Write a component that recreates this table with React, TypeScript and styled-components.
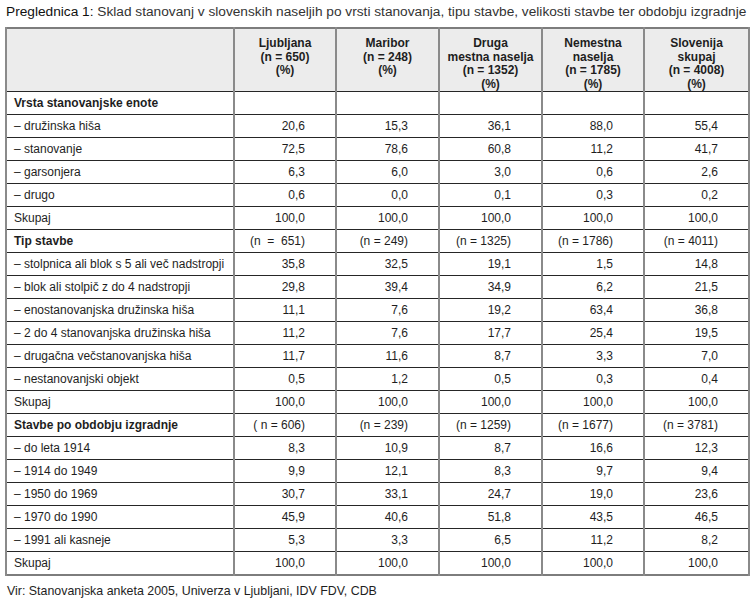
import React from "react";
import styled, { createGlobalStyle } from "styled-components";

const Global = createGlobalStyle`
  html, body { margin: 0; padding: 0; background: #ffffff; }
  body { font-family: "Liberation Sans", Arial, sans-serif; color: #1e1e1e; }
`;

const Page = styled.div`
  width: 753px;
  height: 604px;
  padding: 3px 0 0 5px;
  box-sizing: border-box;
  display: flex;
  flex-direction: column;
`;

const Title = styled.div`
  font-size: 13.7px;
  line-height: 18px;
  color: #333;
  padding-left: 1px;
  margin-bottom: 6px;
  white-space: nowrap;
`;

const TitleLabel = styled.span`
  color: #111;
`;

const Table = styled.table`
  border-collapse: collapse;
  table-layout: fixed;
  width: 743px;
  border: 2px solid #7d7d7d;
  font-size: 12px;
`;

const HeadCell = styled.th`
  background: #ececec;
  border-left: 2px solid #8a8a8a;
  border-right: 2px solid #8a8a8a;
  border-bottom: 1px solid #262626;
  padding: 8px 2px 0;
  height: 62px;
  box-sizing: border-box;
  vertical-align: top;
  text-align: center;
  font-weight: bold;
  font-size: 12px;
  line-height: 13.5px;
  color: #1e1e1e;
`;

const Cell = styled.td<{ $label?: boolean; $bold?: boolean }>`
  border-left: 2px solid #8a8a8a;
  border-right: 2px solid #8a8a8a;
  border-top: 1px solid #262626;
  border-bottom: 1px solid #262626;
  height: 22px;
  padding: ${(p) => (p.$label ? "0 4px 0 7px" : "0 30px 0 4px")};
  text-align: ${(p) => (p.$label ? "left" : "right")};
  font-weight: ${(p) => (p.$bold ? "bold" : "normal")};
  white-space: pre;
  vertical-align: middle;
  line-height: 14px;
  color: #1e1e1e;
`;

const Source = styled.div`
  font-size: 12.4px;
  color: #1e1e1e;
  margin-top: 8px;
  padding-left: 2px;
`;

type Row = { label: string; bold?: boolean; values: string[] };

const total = ["100,0", "100,0", "100,0", "100,0", "100,0"];

const rows: Row[] = [
  { label: "Vrsta stanovanjske enote", bold: true, values: ["", "", "", "", ""] },
  { label: "– družinska hiša", values: ["20,6", "15,3", "36,1", "88,0", "55,4"] },
  { label: "– stanovanje", values: ["72,5", "78,6", "60,8", "11,2", "41,7"] },
  { label: "– garsonjera", values: ["6,3", "6,0", "3,0", "0,6", "2,6"] },
  { label: "– drugo", values: ["0,6", "0,0", "0,1", "0,3", "0,2"] },
  { label: "Skupaj", values: total },
  { label: "Tip stavbe", bold: true, values: ["(n  =  651)", "(n = 249)", "(n = 1325)", "(n = 1786)", "(n = 4011)"] },
  { label: "– stolpnica ali blok s 5 ali več nadstropji", values: ["35,8", "32,5", "19,1", "1,5", "14,8"] },
  { label: "– blok ali stolpič z do 4 nadstropji", values: ["29,8", "39,4", "34,9", "6,2", "21,5"] },
  { label: "– enostanovanjska družinska hiša", values: ["11,1", "7,6", "19,2", "63,4", "36,8"] },
  { label: "– 2 do 4 stanovanjska družinska hiša", values: ["11,2", "7,6", "17,7", "25,4", "19,5"] },
  { label: "– drugačna večstanovanjska hiša", values: ["11,7", "11,6", "8,7", "3,3", "7,0"] },
  { label: "– nestanovanjski objekt", values: ["0,5", "1,2", "0,5", "0,3", "0,4"] },
  { label: "Skupaj", values: total },
  { label: "Stavbe po obdobju izgradnje", bold: true, values: ["( n = 606)", "(n = 239)", "(n = 1259)", "(n = 1677)", "(n = 3781)"] },
  { label: "– do leta 1914", values: ["8,3", "10,9", "8,7", "16,6", "12,3"] },
  { label: "– 1914 do 1949", values: ["9,9", "12,1", "8,3", "9,7", "9,4"] },
  { label: "– 1950 do 1969", values: ["30,7", "33,1", "24,7", "19,0", "23,6"] },
  { label: "– 1970 do 1990", values: ["45,9", "40,6", "51,8", "43,5", "46,5"] },
  { label: "– 1991 ali kasneje", values: ["5,3", "3,3", "6,5", "11,2", "8,2"] },
  { label: "Skupaj", values: total },
];

const headers: string[][] = [
  ["Ljubljana", "(n = 650)", "(%)"],
  ["Maribor", "(n = 248)", "(%)"],
  ["Druga", "mestna naselja", "(n = 1352)", "(%)"],
  ["Nemestna", "naselja", "(n = 1785)", "(%)"],
  ["Slovenija", "skupaj", "(n = 4008)", "(%)"],
];

const widths = [228, 102, 103, 103, 102, 105];

export default function App() {
  return (
    <>
      <Global />
      <Page>
        <Title>
          <TitleLabel>Preglednica 1:</TitleLabel> Sklad stanovanj v slovenskih naseljih po vrsti stanovanja, tipu stavbe, velikosti stavbe ter obdobju izgradnje
        </Title>
        <Table>
          <colgroup>
            {widths.map((w, i) => (
              <col key={i} style={{ width: w }} />
            ))}
          </colgroup>
          <thead>
            <tr>
              <HeadCell />
              {headers.map((h, i) => (
                <HeadCell key={i}>
                  {h.map((line, j) => (
                    <div key={j}>{line}</div>
                  ))}
                </HeadCell>
              ))}
            </tr>
          </thead>
          <tbody>
            {rows.map((r, i) => (
              <tr key={i}>
                <Cell $label $bold={r.bold}>{r.label}</Cell>
                {r.values.map((v, j) => (
                  <Cell key={j}>{v}</Cell>
                ))}
              </tr>
            ))}
          </tbody>
        </Table>
        <Source>Vir: Stanovanjska anketa 2005, Univerza v Ljubljani, IDV FDV, CDB</Source>
      </Page>
    </>
  );
}
